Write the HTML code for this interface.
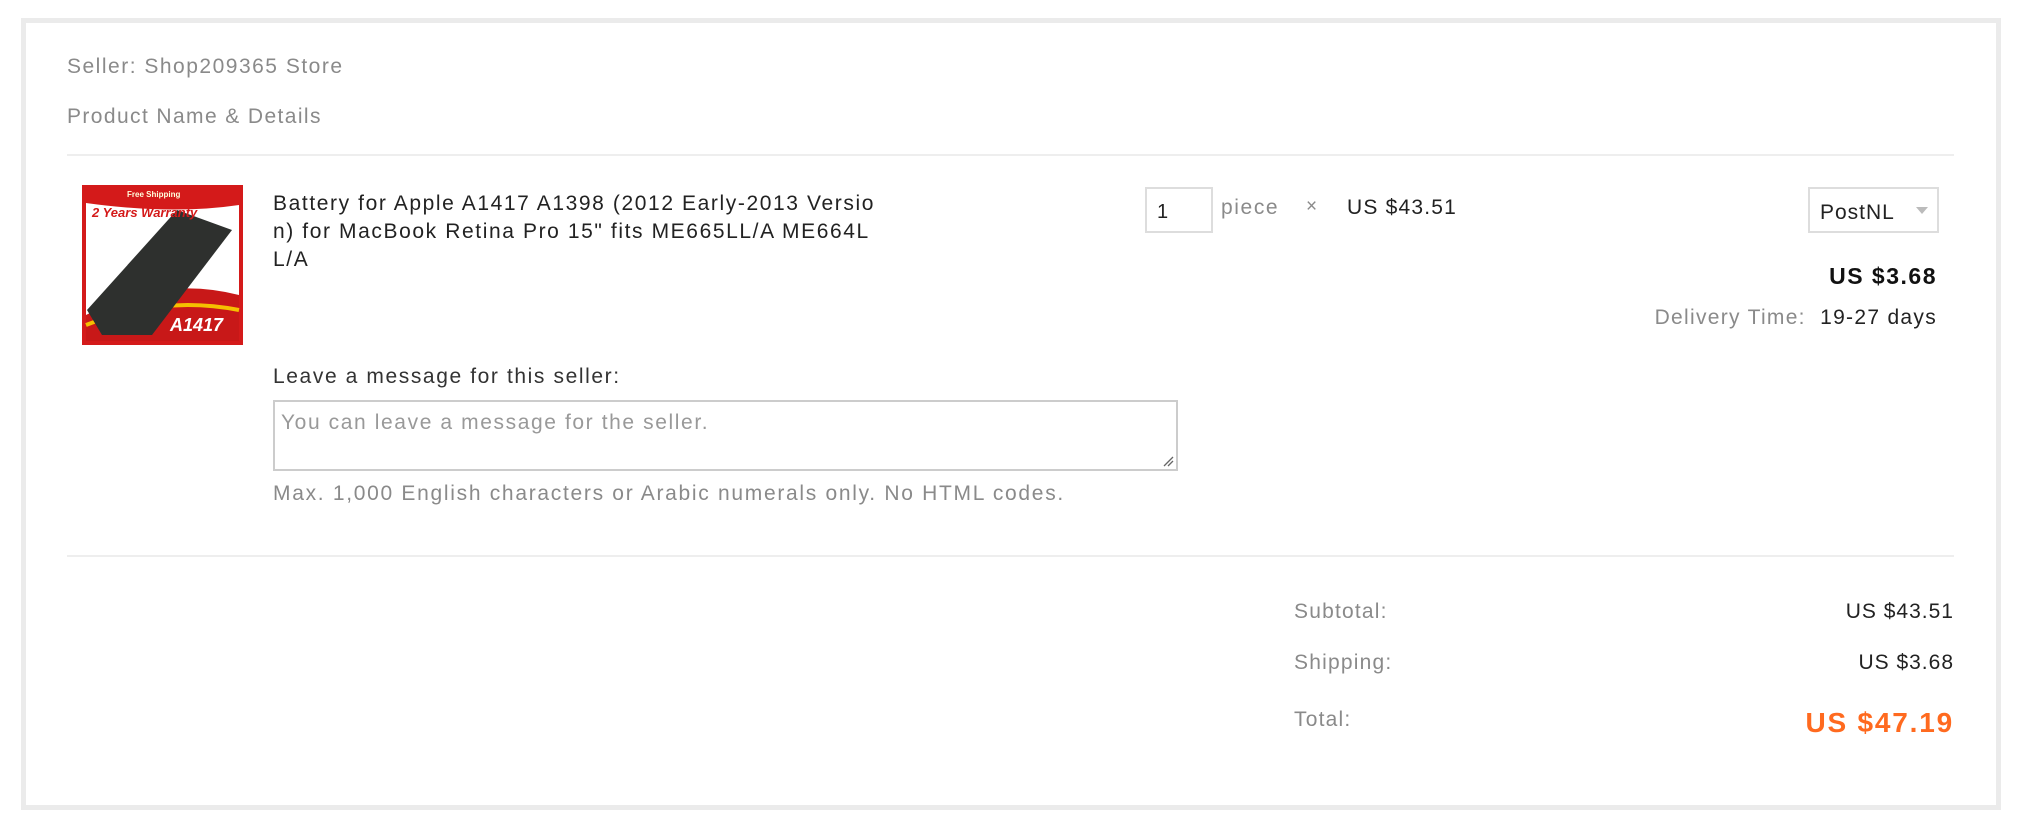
<!DOCTYPE html>
<html><head><meta charset="utf-8"><style>
*{margin:0;padding:0;box-sizing:border-box}
body{width:2020px;height:834px;background:#fff;font-family:"Liberation Sans",Arial,sans-serif;position:relative;overflow:hidden;color:#222}
.box{position:absolute;left:21px;top:18px;width:1980px;height:792px;border:5px solid #ebebeb}
.a{position:absolute;white-space:nowrap;line-height:1}
.g{color:#8a8a8a}
.t{font-size:21px;letter-spacing:1.6px}
.hr{position:absolute;height:2px;background:#eee}
</style></head><body>
<div class="box"></div>
<div class="a g t" style="left:67px;top:56px;font-size:21px;letter-spacing:1.5px">Seller: Shop209365 Store</div>
<div class="a g t" style="left:67px;top:106px;letter-spacing:1.4px">Product Name &amp; Details</div>
<div class="hr" style="left:67px;top:154px;width:1887px"></div>

<svg style="position:absolute;left:82px;top:185px" width="161" height="160" viewBox="0 0 161 160">
<rect width="161" height="160" fill="#d41a1a"/>
<rect x="4" y="4" width="153" height="152" fill="#fff"/>
<path d="M4 4 H157 V20 Q90 30 4 18Z" fill="#d41a1a"/>
<path d="M4 130 Q80 90 157 110 V156 H4Z" fill="#c81818"/>
<path d="M4 140 Q80 110 157 125" stroke="#f5c000" stroke-width="4" fill="none"/>
<path d="M20 150 L5 125 L95 25 L150 45 L70 150Z" fill="#2e302e"/>
<text x="45" y="12" font-size="8" fill="#ffd" font-family="Liberation Sans" font-weight="bold">Free Shipping</text>
<text x="10" y="32" font-size="13" fill="#d41a1a" font-family="Liberation Sans" font-weight="bold" font-style="italic">2 Years Warranty</text>
<text x="88" y="146" font-size="18" fill="#fff" font-family="Liberation Sans" font-weight="bold" font-style="italic">A1417</text>
</svg>

<div class="t" style="position:absolute;left:273px;top:190px;line-height:28px;color:#222;width:700px">Battery for Apple A1417 A1398 (2012 Early-2013 Versio<br>n) for MacBook Retina Pro 15" fits ME665LL/A ME664L<br>L/A</div>

<div style="position:absolute;left:1145px;top:187px;width:68px;height:46px;border:2px solid #ddd;font-size:20px;padding:12px 0 0 10px">1</div>
<div class="a g t" style="left:1221px;top:197px">piece</div>
<div class="a g" style="left:1306px;top:197px;font-size:19px">×</div>
<div class="a t" style="left:1347px;top:197px;letter-spacing:1.2px">US $43.51</div>

<div class="t" style="position:absolute;left:1808px;top:187px;width:131px;height:46px;border:2px solid #ddd;padding:12px 0 0 10px;letter-spacing:1px">PostNL</div>
<div style="position:absolute;left:1916px;top:207px;width:0;height:0;border-left:6px solid transparent;border-right:6px solid transparent;border-top:7px solid #bbb"></div>

<div class="a" style="right:83px;top:265px;font-size:23px;letter-spacing:1.5px;font-weight:bold;color:#111">US $3.68</div>
<div class="a t" style="right:83px;top:307px;letter-spacing:1.3px"><span class="g">Delivery Time:</span>&nbsp; 19-27 days</div>

<div class="a t" style="left:273px;top:366px;color:#333">Leave a message for this seller:</div>
<div style="position:absolute;left:273px;top:400px;width:905px;height:71px;border:2px solid #ccc"></div>
<div class="a t" style="left:281px;top:412px;color:#999">You can leave a message for the seller.</div>
<svg style="position:absolute;left:1163px;top:456px" width="11" height="11"><path d="M1 10 L10 1 M5 10 L10 5" stroke="#666" stroke-width="1.3"/></svg>
<div class="a g t" style="left:273px;top:483px;letter-spacing:1.7px">Max. 1,000 English characters or Arabic numerals only. No HTML codes.</div>

<div class="hr" style="left:67px;top:555px;width:1887px"></div>

<div class="a g t" style="left:1294px;top:601px;letter-spacing:1.2px">Subtotal:</div>
<div class="a t" style="right:66px;top:601px;letter-spacing:1px">US $43.51</div>
<div class="a g t" style="left:1294px;top:652px;letter-spacing:1.2px">Shipping:</div>
<div class="a t" style="right:66px;top:652px;letter-spacing:1px">US $3.68</div>
<div class="a g t" style="left:1294px;top:709px;letter-spacing:1.2px">Total:</div>
<div class="a" style="right:66px;top:709px;font-size:28px;letter-spacing:1.8px;font-weight:bold;color:#ff6a1f">US $47.19</div>
</body></html>
